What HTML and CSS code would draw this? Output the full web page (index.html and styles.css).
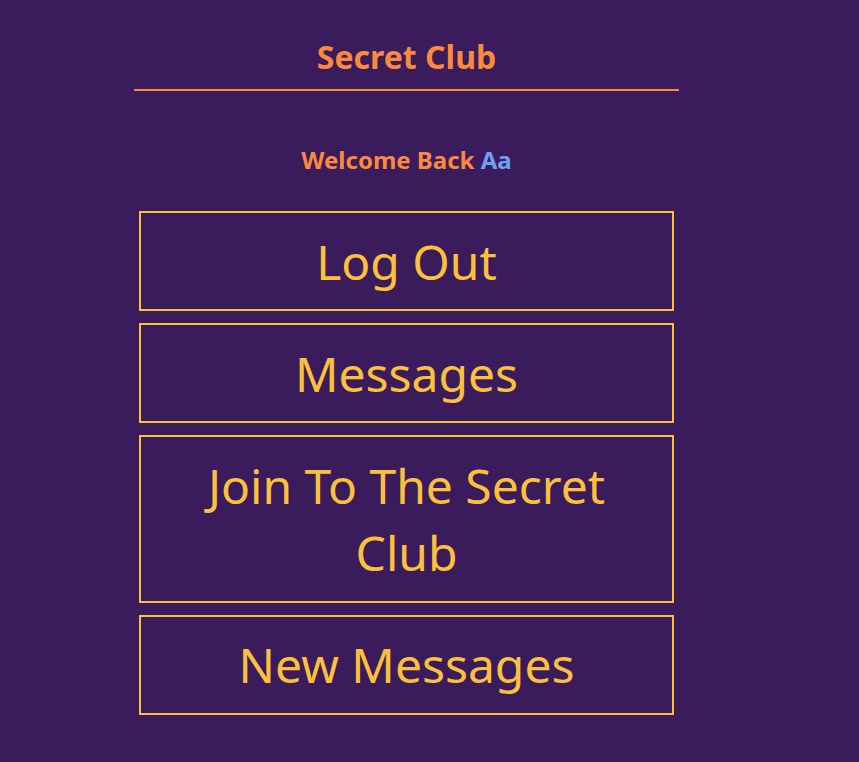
FILE: index.html
```html
<!DOCTYPE html>
<html lang="en">
<head>
<meta charset="utf-8">
<title>Secret Club</title>
<link rel="stylesheet" href="styles.css">
</head>
<body>
<div class="page">
  <header class="header">
    <h1 class="title">Secret Club</h1>
  </header>
  <h2 class="welcome">Welcome Back <span class="user">Aa</span></h2>
  <nav class="actions">
    <a class="btn" href="#">Log Out</a>
    <a class="btn" href="#">Messages</a>
    <a class="btn" href="#">Join To The Secret Club</a>
    <a class="btn" href="#">New Messages</a>
  </nav>
</div>
</body>
</html>
```
FILE: styles.css
```css
html, body {
  margin: 0;
  padding: 0;
  background: #3a1b5b;
  font-family: "Noto Sans", "Open Sans", sans-serif;
}
.page {
  width: 545px;
  margin-left: 134px;
}
.header {
  padding: 35px 0 11px;
  border-bottom: 2px solid #fb8a3c;
}
.title {
  margin: 0;
  font-size: 32px;
  font-weight: 700;
  color: #fb8a3c;
  text-align: center;
  line-height: normal;
}
.welcome {
  margin: 52px 0 0;
  font-size: 24px;
  font-weight: 700;
  color: #fb8a3c;
  text-align: center;
  line-height: normal;
}
.user {
  color: #6fa2f5;
}
.actions {
  display: flex;
  flex-direction: column;
  gap: 12px;
  margin: 35px 5px 0;
}
.btn {
  display: block;
  border: 2px solid #fcc13a;
  padding: 14.5px 40px;
  color: #fcc13a;
  font-size: 48px;
  text-align: center;
  text-decoration: none;
  line-height: 1.4;
}
```
